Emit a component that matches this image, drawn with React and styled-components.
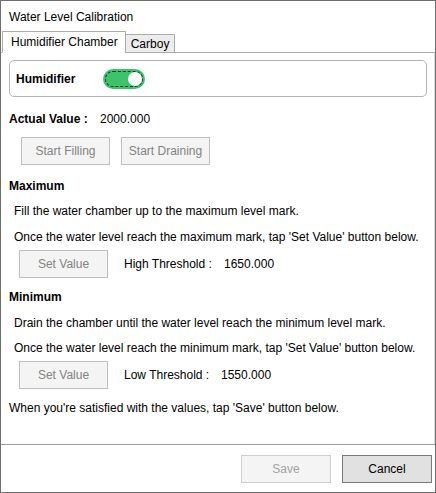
import React from "react";
import styled, { createGlobalStyle } from "styled-components";

const GlobalStyle = createGlobalStyle`
  html, body {
    margin: 0;
    padding: 0;
    background: #ffffff;
  }
  body {
    font-family: "Liberation Sans", Arial, sans-serif;
    font-size: 12px;
    color: #000;
  }
`;

function App() {
  return (
    <>
      <GlobalStyle />
      <Window>
        <TitleBar>Water Level Calibration</TitleBar>
        <TabStrip>
          <Tab $active>Humidifier Chamber</Tab>
          <Tab>Carboy</Tab>
        </TabStrip>
        <Panel>
          <GroupBox>
            <GroupLabel>Humidifier</GroupLabel>
            <Toggle>
              <Knob />
            </Toggle>
          </GroupBox>

          <Row $top={14}>
            <Label $width={91}>Actual Value :</Label>
            <span>2000.000</span>
          </Row>

          <ButtonRow $top={10} $indent={12}>
            <Button>Start Filling</Button>
            <Button>Start Draining</Button>
          </ButtonRow>

          <Label $top={13}>Maximum</Label>
          <Text $top={9}>Fill the water chamber up to the maximum level mark.</Text>
          <Text $top={10}>
            Once the water level reach the maximum mark, tap 'Set Value' button below.
          </Text>
          <ButtonRow $top={5} $indent={10}>
            <Button>Set Value</Button>
            <Threshold>
              <ThresholdLabel $width={100}>High Threshold :</ThresholdLabel>
              <span>1650.000</span>
            </Threshold>
          </ButtonRow>

          <Label $top={11}>Minimum</Label>
          <Text $top={10}>Drain the chamber until the water level reach the minimum level mark.</Text>
          <Text $top={9}>
            Once the water level reach the minimum mark, tap 'Set Value' button below.
          </Text>
          <ButtonRow $top={5} $indent={10}>
            <Button>Set Value</Button>
            <Threshold>
              <ThresholdLabel $width={97}>Low Threshold :</ThresholdLabel>
              <span>1550.000</span>
            </Threshold>
          </ButtonRow>

          <Text $top={11} $indent={0}>
            When you're satisfied with the values, tap 'Save' button below.
          </Text>
        </Panel>
        <Footer>
          <DialogButton disabled>Save</DialogButton>
          <DialogButton $primary>Cancel</DialogButton>
        </Footer>
      </Window>
    </>
  );
}

export default App;

const Window = styled.div`
  box-sizing: border-box;
  width: 436px;
  height: 493px;
  border: 1px solid #6f6f6f;
  display: flex;
  flex-direction: column;
  background: #fff;
`;

const TitleBar = styled.div`
  height: 31px;
  padding-left: 8px;
  display: flex;
  align-items: center;
  font-size: 12px;
`;

const TabStrip = styled.div`
  display: flex;
  align-items: flex-end;
  height: 21px;
  padding-left: 1px;
  margin-bottom: -1px;
  position: relative;
  z-index: 1;
`;

const Tab = styled.div`
  box-sizing: border-box;
  height: ${(p) => (p.$active ? "22px" : "19px")};
  padding-left: ${(p) => (p.$active ? "8px" : "5px")};
  padding-right: ${(p) => (p.$active ? "7px" : "5px")};
  display: flex;
  align-items: center;
  border: 1px solid #acacac;
  border-bottom: 1px solid ${(p) => (p.$active ? "#fff" : "#acacac")};
  background: ${(p) => (p.$active ? "#fff" : "#ececec")};
  margin-left: ${(p) => (p.$active ? "0" : "-1px")};
  font-size: 12px;
`;

const Panel = styled.div`
  flex: 1;
  border-top: 1px solid #acacac;
  border-right: 1px solid #dadada;
  padding: 7px 7px 0 8px;
  display: flex;
  flex-direction: column;
  align-items: flex-start;
`;

const GroupBox = styled.div`
  box-sizing: border-box;
  align-self: stretch;
  height: 37px;
  border: 1px solid #b4b4b4;
  border-radius: 5px;
  display: flex;
  align-items: center;
  padding-left: 6px;
`;

const GroupLabel = styled.span`
  font-weight: bold;
  width: 87px;
`;

const Toggle = styled.div`
  position: relative;
  box-sizing: border-box;
  width: 42px;
  height: 20px;
  border-radius: 10px;
  background: #3cc36c;
  display: flex;
  align-items: center;
  justify-content: flex-end;
  padding-right: 3px;

  &::before {
    content: "";
    position: absolute;
    inset: 2px;
    border: 1px dashed #2b2b2b;
    border-radius: 8px;
  }
`;

const Knob = styled.div`
  width: 14px;
  height: 14px;
  border-radius: 50%;
  background: #fff;
  position: relative;
`;

const Row = styled.div`
  display: flex;
  align-items: center;
  height: 16px;
  margin-top: ${(p) => p.$top || 0}px;
`;

const Label = styled.div`
  font-weight: bold;
  height: 16px;
  line-height: 16px;
  margin-top: ${(p) => p.$top || 0}px;
  width: ${(p) => (p.$width ? `${p.$width}px` : "auto")};
  white-space: nowrap;
`;

const Text = styled.div`
  height: 16px;
  line-height: 16px;
  margin-top: ${(p) => p.$top || 0}px;
  padding-left: ${(p) => (p.$indent === undefined ? 5 : p.$indent)}px;
  white-space: nowrap;
`;

const ButtonRow = styled.div`
  display: flex;
  align-items: center;
  gap: 11px;
  margin-top: ${(p) => p.$top || 0}px;
  padding-left: ${(p) => p.$indent}px;
`;

const Button = styled.button`
  box-sizing: border-box;
  width: 89px;
  height: 28px;
  border: 1px solid #bfbfbf;
  background: #f4f4f4;
  color: #838383;
  font-family: "Liberation Sans", Arial, sans-serif;
  font-size: 12px;
  padding: 0;
`;

const Threshold = styled.div`
  margin-left: 5px;
  display: flex;
  align-items: center;
  height: 16px;
`;

const ThresholdLabel = styled.span`
  width: ${(p) => p.$width}px;
  white-space: nowrap;
`;

const Footer = styled.div`
  box-sizing: border-box;
  height: 48px;
  border-top: 1px solid #a0a0a0;
  display: flex;
  justify-content: flex-end;
  align-items: flex-start;
  gap: 11px;
  padding: 10px 3px 0 0;
`;

const DialogButton = styled.button`
  box-sizing: border-box;
  width: 90px;
  height: 28px;
  font-family: "Liberation Sans", Arial, sans-serif;
  font-size: 12px;
  padding: 0;
  border: 1px solid ${(p) => (p.$primary ? "#7a7a7a" : "#cfcfcf")};
  background: ${(p) => (p.$primary ? "#e1e1e1" : "#f4f4f4")};
  color: ${(p) => (p.$primary ? "#000" : "#a3a3a3")};
`;
